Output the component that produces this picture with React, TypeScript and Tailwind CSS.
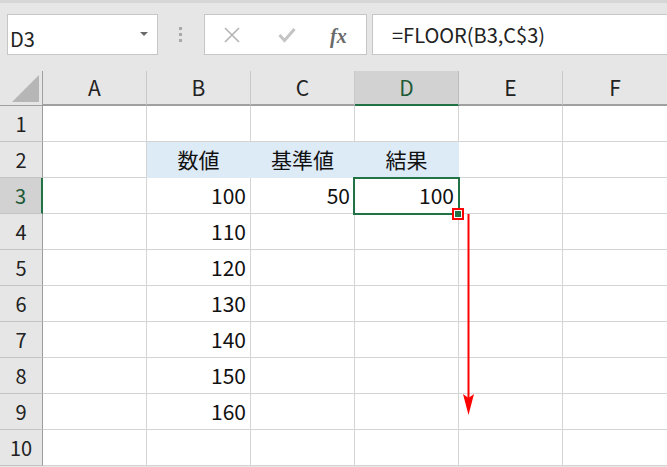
import React from "react";

const FONT = { fontFamily: '"Noto Sans CJK JP", "Noto Sans", sans-serif' };

const cols = ["A", "B", "C", "D", "E", "F"];
const bVals: Record<number, string> = { 3: "100", 4: "110", 5: "120", 6: "130", 7: "140", 8: "150", 9: "160" };

function Cell({ children, align = "right", fill = false, last = false }: { children?: React.ReactNode; align?: "right" | "center"; fill?: boolean; last?: boolean }) {
  return (
    <div
      className={`h-[36px] border-b flex items-center text-[21px] text-[#111] px-[4px] ${
        fill ? "bg-[#ddebf7] border-[#ddebf7]" : "bg-white border-[#d4d4d4]"
      } ${last ? "" : "border-r"} ${align === "center" ? "justify-center" : "justify-end"}`}
    >
      {children}
    </div>
  );
}

export default function App() {
  const rows = Array.from({ length: 10 }, (_, i) => i + 1);
  return (
    <div className="w-[667px] h-[467px] bg-[#e6e6e6] overflow-hidden" style={FONT}>
      <div className="h-[3px] bg-[#d6d6d6]" />
      {/* toolbar */}
      <div className="flex items-stretch h-[41px] mt-[11px]">
        <div className="ml-[7px] w-[151px] bg-white border border-[#c6c6c6] flex items-center justify-between pl-[2px] pr-[9px]">
          <span className="text-[20px] text-[#222] pt-[8px] leading-none">D3</span>
          <svg width="8" height="5" viewBox="0 0 8 5"><polygon points="0,0 8,0 4,4" fill="#6b6b6b" /></svg>
        </div>
        <div className="w-[46px] flex flex-col items-center justify-center gap-[3px] pr-[1px]">
          <div className="w-[3px] h-[3px] bg-[#a9a9a9]" />
          <div className="w-[3px] h-[3px] bg-[#a9a9a9]" />
          <div className="w-[3px] h-[3px] bg-[#a9a9a9]" />
        </div>
        <div className="w-[163px] bg-white border border-[#c6c6c6] relative flex items-center">
          <svg className="absolute left-[19px] top-[12px]" width="16" height="16" viewBox="0 0 16 16">
            <path d="M1 1 L15 15 M15 1 L1 15" stroke="#b4b4b4" strokeWidth="1.6" />
          </svg>
          <svg className="absolute left-[73px] top-[12px]" width="18" height="16" viewBox="0 0 18 16">
            <path d="M1.5 8 L6.5 13.5 L16.5 2" stroke="#c4c4c4" strokeWidth="3" fill="none" />
          </svg>
          <span
            className="absolute left-[125px] top-[6px] text-[20px] italic font-bold text-[#6a6a6a]"
            style={{ fontFamily: '"Liberation Serif", serif' }}
          >
            fx
          </span>
        </div>
        <div className="ml-[5px] flex-1 bg-white border border-[#c6c6c6] border-r-0 flex items-center pl-[19px]">
          <span className="text-[20px] text-[#222] leading-none">=FLOOR(B3,C$3)</span>
        </div>
      </div>

      {/* grid */}
      <div className="relative mt-[16px]">
        <div className="grid grid-cols-[43px_104px_104px_104px_104px_104px_1fr]">
          {/* header row */}
          <div className="h-[35px] bg-[#e6e6e6] border-r border-b border-[#a0a0a0] relative overflow-hidden">
            <svg className="absolute left-[12px] top-[4px]" width="28" height="28" viewBox="0 0 28 28">
              <polygon points="27,0 27,27 0,27" fill="#b6b6b6" />
            </svg>
          </div>
          {cols.map((c) => (
            <div
              key={c}
              className={`h-[35px] flex items-center justify-center text-[21px] border-b-[2px] ${
                c === "D"
                  ? "bg-[#d2d2d2] text-[#1f5a38] border-b-[#217346] border-r border-r-[#bdbdbd]"
                  : "bg-[#e6e6e6] text-[#222] border-b-[#a0a0a0] border-b border-r border-r-[#c8c8c8]"
              } ${c === "F" ? "border-r-0" : ""}`}
            >
              {c}
            </div>
          ))}
          {rows.map((r) => (
            <React.Fragment key={r}>
              <div
                className={`h-[36px] flex items-center justify-center text-[20px] border-b border-b-[#c4c4c4] ${
                  r === 3
                    ? "bg-[#d2d2d2] text-[#1f5a38] border-r-[2px] border-r-[#217346]"
                    : "bg-[#e6e6e6] text-[#222] border-r border-r-[#9c9c9c]"
                }`}
              >
                {r}
              </div>
              <Cell />
              {r === 2 ? (
                <>
                  <Cell fill align="center">数値</Cell>
                  <Cell fill align="center">基準値</Cell>
                  <Cell fill align="center">結果</Cell>
                </>
              ) : (
                <>
                  <Cell>{bVals[r]}</Cell>
                  <Cell>{r === 3 ? "50" : ""}</Cell>
                  <Cell>{r === 3 ? "100" : ""}</Cell>
                </>
              )}
              <Cell />
              <Cell last />
            </React.Fragment>
          ))}
        </div>

        {/* selection D3 */}
        <div className="absolute left-[353px] top-[106px] w-[107px] h-[38px] border-2 border-[#217346] pointer-events-none" />
        {/* fill handle with red outline */}
        <div className="absolute left-[452px] top-[137px] w-[12px] h-[12px] border-2 border-[#ff0000] bg-white p-[1px]">
          <div className="w-full h-full bg-[#217346]" />
        </div>
        {/* red arrow */}
        <svg className="absolute left-[460px] top-[140px]" width="16" height="210" viewBox="0 0 16 210">
          <line x1="8.5" y1="3" x2="8.5" y2="190" stroke="#ff0000" strokeWidth="2" />
          <polygon points="3,183 8.5,187 14,183 8.5,204" fill="#ff0000" />
        </svg>
      </div>
    </div>
  );
}
